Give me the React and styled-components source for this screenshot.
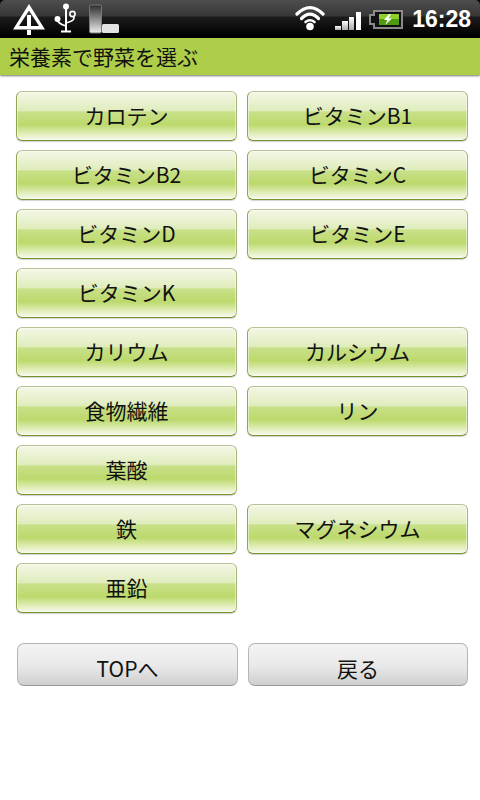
import styled, { createGlobalStyle } from "styled-components";

const GlobalStyle = createGlobalStyle`
  html, body {
    margin: 0;
    padding: 0;
    background: #fff;
  }
  body {
    font-family: "Noto Sans CJK JP", "Noto Sans", sans-serif;
  }
`;

const Screen = styled.div`
  width: 480px;
  height: 800px;
  overflow: hidden;
  display: flex;
  flex-direction: column;
  background: #fff;
`;

const StatusBar = styled.div`
  height: 38px;
  flex: none;
  display: flex;
  align-items: center;
  justify-content: space-between;
  padding: 0 9px 0 13px;
  border-radius: 5px 5px 0 0;
  background: linear-gradient(#4e4e4e 0, #363636 16px, #1c1c1c 17px, #000 36px);
`;

const BarBackdrop = styled.div`
  flex: none;
  background: #000;
`;

const StatusGroup = styled.div`
  display: flex;
  align-items: center;
  gap: ${(p) => p.$gap}px;
`;

const Clock = styled.span`
  font-family: "Liberation Sans", Arial, sans-serif;
  font-size: 23px;
  font-weight: 700;
  color: #fff;
  margin-left: 1px;
  line-height: 38px;
`;

const TitleBar = styled.h1`
  height: 37px;
  flex: none;
  margin: 0;
  padding: 0 0 2px 9px;
  box-sizing: border-box;
  display: flex;
  align-items: center;
  font-size: 21px;
  font-weight: 400;
  color: #111;
  background: #aece4a;
  box-shadow: 0 1px 2px rgba(0, 0, 0, 0.55);
`;

const Content = styled.div`
  padding: 16px 12px 0 16px;
`;

const NutrientGrid = styled.div`
  display: grid;
  grid-template-columns: 221px 221px;
  grid-auto-rows: 50px;
  column-gap: 10px;
  row-gap: 9px;
`;

const NutrientButton = styled.button`
  grid-column: ${(p) => (p.$first ? 1 : 2)};
  padding: 0 0 1px;
  border: 1px solid #b9c196;
  border-bottom-color: #75952b;
  border-left-color: #8fa653;
  border-right-color: #a7b77b;
  border-radius: 6px;
  font: inherit;
  font-size: 21px;
  line-height: 1;
  color: #111;
  box-shadow: inset 0 0 0 1px rgba(255, 255, 255, 0.45), 0 1px 1px rgba(0, 0, 0, 0.18);
  background: linear-gradient(
    #f3f7e6 0,
    #dfecbb 40%,
    #c9e08a 41%,
    #bcd96c 68%,
    #dfecb4 86%,
    #f6f9ec 100%
  );
`;

const NavRow = styled.div`
  display: grid;
  grid-template-columns: 221px 220px;
  column-gap: 10px;
  margin: 30px 0 0 1px;
`;

const NavButton = styled.button`
  height: 43px;
  padding: 8px 0 0;
  border: 1px solid #b5b5b5;
  border-bottom-color: #999;
  border-radius: 7px;
  font: inherit;
  font-size: 21px;
  line-height: 1;
  color: #111;
  overflow: hidden;
  background: linear-gradient(#f4f4f4, #e8e8e8 55%, #cfcfcf);
`;

const WarningIcon = () => (
  <svg width="32" height="38" viewBox="0 0 32 38">
    <path d="M16 4 L32 29.5 H0 Z M16 10.5 L6 26 H26 Z" fill="#fff" fillRule="evenodd" />
    <rect x="14" y="15" width="4" height="11" fill="#fff" />
    <rect x="14" y="30" width="4" height="5" fill="#fff" />
  </svg>
);

const UsbIcon = () => (
  <svg width="22" height="38" viewBox="0 0 22 38">
    <circle cx="12" cy="6.5" r="3" fill="#fff" />
    <path d="M12 7 V31 M7 31.5 H17" stroke="#fff" strokeWidth="2" fill="none" />
    <path d="M3 19 Q4 24 12 26 M20 17 V18 Q20 21 12 23" stroke="#fff" strokeWidth="1.6" fill="none" />
    <circle cx="3.5" cy="19" r="3" fill="#fff" />
    <circle cx="18.5" cy="14" r="2.6" fill="none" stroke="#fff" strokeWidth="1.6" />
  </svg>
);

const StorageIcon = () => (
  <svg width="31" height="38" viewBox="0 0 31 38">
    <defs>
      <linearGradient id="storage" x1="0" y1="0" x2="0" y2="1">
        <stop offset="0" stopColor="#2c2c2c" />
        <stop offset="1" stopColor="#eee" />
      </linearGradient>
    </defs>
    <rect x="0.5" y="5" width="12" height="28" rx="1.5" fill="url(#storage)" stroke="#777" />
    <rect x="13" y="24" width="17" height="9" rx="1.5" fill="#e2e2e2" />
  </svg>
);

const WifiIcon = () => (
  <svg width="30" height="38" viewBox="0 0 30 38">
    <g fill="none" stroke="#fff" strokeWidth="3.2" strokeLinecap="round">
      <path d="M2 14 Q15 1 28 14" />
      <path d="M6.5 18.5 Q15 10 23.5 18.5" />
    </g>
    <path d="M10.5 22 Q15 18.5 19.5 22" fill="none" stroke="#fff" strokeWidth="2.6" strokeLinecap="round" />
    <circle cx="15" cy="26.5" r="3.8" fill="#fff" />
  </svg>
);

const SignalIcon = () => (
  <svg width="26" height="38" viewBox="0 0 26 38">
    <defs>
      <linearGradient id="signal" x1="0" y1="0" x2="0" y2="1">
        <stop offset="0" stopColor="#fff" />
        <stop offset="1" stopColor="#aaa" />
      </linearGradient>
    </defs>
    <rect x="0" y="26" width="6" height="4" fill="url(#signal)" />
    <rect x="7" y="21" width="6" height="9" fill="url(#signal)" />
    <rect x="14" y="17" width="5" height="13" fill="url(#signal)" />
    <rect x="21" y="12" width="5" height="18" fill="#fff" />
  </svg>
);

const BatteryIcon = () => (
  <svg width="34" height="38" viewBox="0 0 34 38">
    <path d="M5 11 H33 V28 H5 V24 H1 V15 H5 Z" fill="#111" stroke="#8a8a8a" strokeWidth="2" />
    <rect x="10" y="14" width="20" height="11" fill="#4f9a10" />
    <rect x="10" y="14" width="20" height="5" fill="#8fce2e" />
    <path d="M20 14 L15 20 H18.5 L16 25 L23 18.5 H19.5 L22 14 Z" fill="#fff" />
  </svg>
);

const cells = [
  "カロテン", "ビタミンB1",
  "ビタミンB2", "ビタミンC",
  "ビタミンD", "ビタミンE",
  "ビタミンK", null,
  "カリウム", "カルシウム",
  "食物繊維", "リン",
  "葉酸", null,
  "鉄", "マグネシウム",
  "亜鉛", null,
];

export default function App() {
  return (
    <Screen>
      <GlobalStyle />
      <BarBackdrop>
        <StatusBar>
          <StatusGroup $gap={9}>
            <WarningIcon />
            <StatusGroup $gap={13}>
              <UsbIcon />
              <StorageIcon />
            </StatusGroup>
          </StatusGroup>
          <StatusGroup $gap={8}>
            <StatusGroup $gap={10}>
              <WifiIcon />
              <SignalIcon />
            </StatusGroup>
            <BatteryIcon />
            <Clock>16:28</Clock>
          </StatusGroup>
        </StatusBar>
      </BarBackdrop>
      <TitleBar>栄養素で野菜を選ぶ</TitleBar>
      <Content>
        <NutrientGrid>
          {cells.map((label, i) =>
            label ? (
              <NutrientButton key={label} $first={i % 2 === 0}>
                {label}
              </NutrientButton>
            ) : null
          )}
        </NutrientGrid>
        <NavRow>
          <NavButton>TOPへ</NavButton>
          <NavButton>戻る</NavButton>
        </NavRow>
      </Content>
    </Screen>
  );
}
